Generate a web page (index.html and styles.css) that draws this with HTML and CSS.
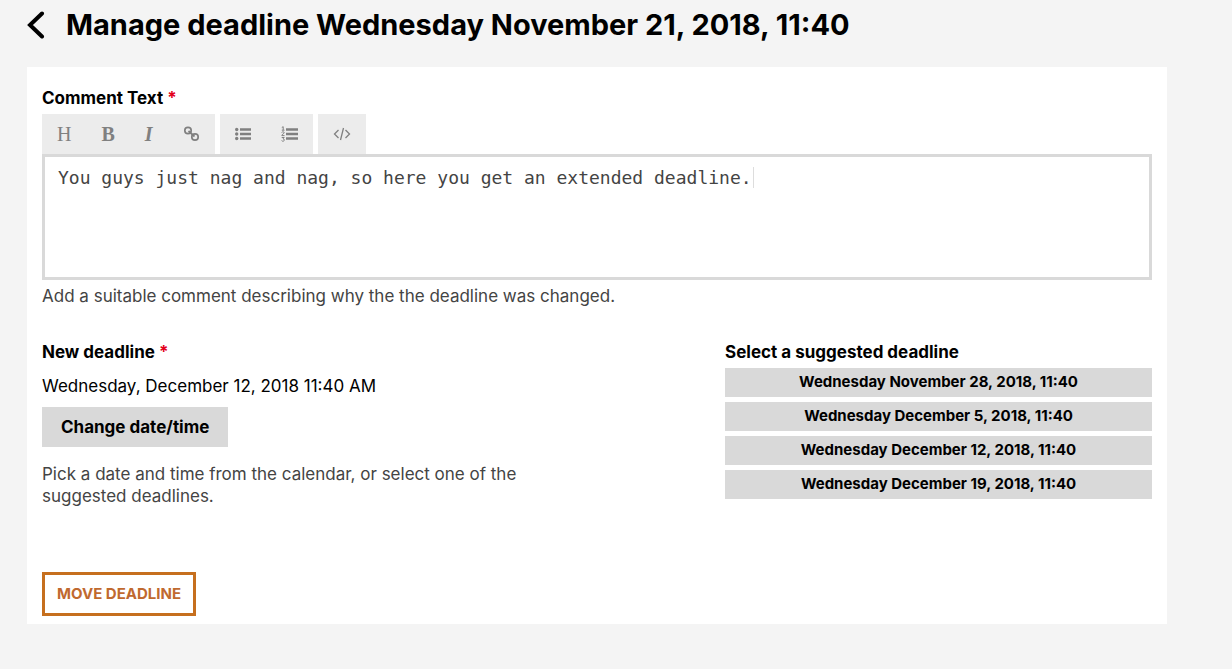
FILE: index.html
```html
<!DOCTYPE html>
<html lang="en">
<head>
<meta charset="utf-8">
<meta name="viewport" content="width=device-width, initial-scale=1">
<title>Manage deadline</title>
<link rel="stylesheet" href="styles.css">
</head>
<body>
<header class="page-header">
  <a class="back" href="#" aria-label="Back">
    <svg width="18" height="28" viewBox="0 0 18 28" fill="none" stroke="currentColor" stroke-width="4" stroke-linecap="round"><path d="M15 2.500 3 14l12 11.500"/></svg>
  </a>
  <h1 class="title">Manage deadline Wednesday November 21, 2018, 11:40</h1>
</header>
<main class="panel">
  <form class="form">
    <label class="label" for="comment">Comment Text <span class="required">*</span></label>
    <div class="toolbar">
      <div class="tool-group">
        <button type="button" class="tool tool-heading" aria-label="Heading">H</button>
        <button type="button" class="tool tool-bold" aria-label="Bold">B</button>
        <button type="button" class="tool tool-italic" aria-label="Italic">I</button>
        <button type="button" class="tool" aria-label="Link">
          <svg width="17" height="16" viewBox="0 0 17 16" fill="none" stroke="currentColor" stroke-width="1.700"><circle cx="5" cy="4.500" r="3.200"/><circle cx="12" cy="11" r="3.200"/><path d="m5.500 5 6 5.500"/></svg>
        </button>
      </div>
      <div class="tool-group">
        <button type="button" class="tool" aria-label="Bulleted list">
          <svg width="16" height="14" viewBox="0 0 16 14" fill="currentColor"><circle cx="1.700" cy="2.500" r="1.700"/><circle cx="1.700" cy="7" r="1.700"/><circle cx="1.700" cy="11.500" r="1.700"/><path d="M5 1.300h11v2.400H5zM5 5.800h11v2.400H5zM5 10.300h11v2.400H5z"/></svg>
        </button>
        <button type="button" class="tool" aria-label="Numbered list">
          <svg width="17" height="16" viewBox="0 0 17 16" fill="currentColor"><path d="M5 2.300h12v2.400H5zM5 6.800h12v2.400H5zM5 11.300h12v2.400H5z"/><path d="M.8 1.500 2.200.700V4M.8 4.200h2.700M.7 6.500c.4-1 2.500-1 2.500.2C3.200 7.600.8 8.300.8 9.600h2.700M.7 11.500h2.500L2 12.800c1.800 0 1.800 2.400-.1 2.400-.6 0-1-.2-1.300-.6" fill="none" stroke="currentColor"/></svg>
        </button>
      </div>
      <div class="tool-group">
        <button type="button" class="tool" aria-label="Code">
          <svg width="18" height="14" viewBox="0 0 18 14" fill="none" stroke="currentColor" stroke-width="1.300"><path d="M5.500 3 1.500 7l4 4M12.500 3l4 4-4 4M10.500 1l-3 12"/></svg>
        </button>
      </div>
    </div>
    <div class="editor">
      <textarea class="comment" id="comment" spellcheck="false">You guys just nag and nag, so here you get an extended deadline.</textarea>
      <span class="caret"></span>
    </div>
    <p class="help">Add a suitable comment describing why the the deadline was changed.</p>
    <div class="columns">
      <section class="new-deadline">
        <h2 class="label">New deadline <span class="required">*</span></h2>
        <p class="date">Wednesday, December 12, 2018 11:40 AM</p>
        <button type="button" class="change">Change date/time</button>
        <p class="help">Pick a date and time from the calendar, or select one of the suggested deadlines.</p>
      </section>
      <section class="suggestions">
        <h2 class="label">Select a suggested deadline</h2>
        <button type="button" class="suggestion">Wednesday November 28, 2018, 11:40</button>
        <button type="button" class="suggestion">Wednesday December 5, 2018, 11:40</button>
        <button type="button" class="suggestion">Wednesday December 12, 2018, 11:40</button>
        <button type="button" class="suggestion">Wednesday December 19, 2018, 11:40</button>
      </section>
    </div>
    <button type="submit" class="submit">MOVE DEADLINE</button>
  </form>
</main>
</body>
</html>
```
FILE: styles.css
```css
* { box-sizing: border-box; }
body {
  margin: 0;
  background: #f4f4f4;
  color: #000;
  font-family: Inter, "Open Sans", sans-serif;
  font-size: 17px;
  line-height: 22px;
}
h1, h2, p { margin: 0; }
button { font: inherit; color: inherit; border: 0; border-radius: 0; cursor: pointer; }
.page-header {
  display: flex;
  align-items: center;
  gap: 21px;
  height: 67px;
  padding: 0 27px 17px;
}
.back { display: flex; color: #000; }
.title { font-size: 29px; line-height: 36px; font-weight: 700; }
.panel { margin: 0 65px 45px 27px; padding: 20px 15px 8px; background: #fff; }
.form { display: flex; flex-direction: column; }
.label { font-size: 17px; line-height: 22px; font-weight: 700; }
.required { color: #e3001b; }
.toolbar { display: flex; gap: 5px; margin-top: 5px; }
.tool-group { display: flex; height: 40px; background: #ececec; }
.tool {
  display: flex;
  align-items: center;
  padding: 0 15px;
  background: transparent;
  color: #808080;
}
.tool-heading, .tool-bold, .tool-italic { font-family: "Liberation Serif", serif; font-size: 20px; }
.tool-bold { font-weight: 700; }
.tool-italic { font-style: italic; font-weight: 700; }
.editor {
  position: relative;
  display: flex;
  font-family: "DejaVu Sans Mono", monospace;
  font-size: 18px;
}
.comment {
  width: 100%;
  height: 126px;
  padding: 10px 13px;
  border: 3px solid #d9d9d9;
  border-radius: 0;
  outline: 0;
  resize: none;
  background: #fff;
  color: #444;
  font: inherit;
}
.caret {
  position: absolute;
  top: 13px;
  left: calc(64ch + 17px);
  width: 1px;
  height: 21px;
  background: #ddd;
}
.help { margin-top: 5px; color: #444; }
.columns { display: grid; grid-template-columns: 8fr 5fr; margin-top: 34px; }
.new-deadline { padding-right: 128px; }
.date { margin: 12px 0 10px; }
.change { height: 40px; padding: 0 19px; background: #d9d9d9; font-weight: 700; }
.new-deadline .help { margin-top: 16px; }
.suggestions { display: flex; flex-direction: column; gap: 5px; }
.suggestion {
  height: 29px;
  padding: 0 12px 2px;
  background: #d9d9d9;
  font-size: 15px;
  line-height: 20px;
  font-weight: 700;
}
.submit {
  align-self: flex-start;
  height: 44px;
  margin-top: 65px;
  padding: 0 12px;
  border: 3px solid #c66f1e;
  background: #fff;
  color: #c0692f;
  font-size: 15px;
  font-weight: 700;
}
```
